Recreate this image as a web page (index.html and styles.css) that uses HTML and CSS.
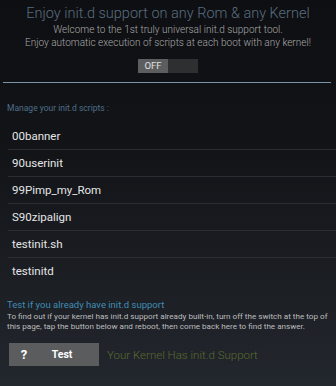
FILE: index.html
```html
<!DOCTYPE html>
<html lang="en">
<head>
  <meta charset="UTF-8" />
  <meta name="viewport" content="width=device-width, initial-scale=1.0" />
  <title>Universal Init.d</title>
  <link rel="stylesheet" href="styles.css">
</head>
<body>

  <!-- Header -->
  <div class="header">
    <h1 class="title">Enjoy init.d support on any Rom &amp; any Kernel</h1>
    <p class="intro">Welcome to the 1st truly universal init.d support tool.</p>
    <p class="intro">Enjoy automatic execution of scripts at each boot with any kernel!</p>
    <div class="switch" onclick="toggleSwitch(this)">
      <span class="switch-thumb">OFF</span>
      <span class="switch-track"></span>
    </div>
  </div>

  <div class="divider"></div>

  <!-- Scripts list -->
  <div class="section-label">Manage your init.d scripts :</div>
  <ul class="scripts">
    <li>00banner</li>
    <li>90userinit</li>
    <li>99Pimp_my_Rom</li>
    <li>S90zipalign</li>
    <li>testinit.sh</li>
    <li>testinitd</li>
  </ul>

  <!-- Test section -->
  <div class="test-section">
    <div class="test-title">Test if you already have init.d support</div>
    <p class="test-desc">To find out if your kernel has init.d support already built-in, turn off the switch at the top of this page, tap the button below and reboot, then come back here to find the answer.</p>
    <div class="test-row">
      <button class="test-btn"><span class="test-icon">?</span><span class="test-label">Test</span></button>
      <span class="test-result">Your Kernel Has init.d Support</span>
    </div>
  </div>

  <script>
    function toggleSwitch(el) {
      el.classList.toggle('on');
    }
  </script>

</body>
</html>
```

FILE: styles.css
```css
* {
  box-sizing: border-box;
  margin: 0;
  padding: 0;
}

body {
  font-family: Roboto, 'Noto Sans', sans-serif;
  background: linear-gradient(to bottom, #0e0f12 0%, #121418 40%, #1c1f24 75%, #23272e 100%);
  width: 336px;
  height: 386px;
  overflow: hidden;
}

.header {
  text-align: center;
  padding-top: 5px;
}

.title {
  font-size: 14.5px;
  font-weight: 300;
  color: #5a6d80;
  line-height: 18px;
}

.intro {
  font-size: 10px;
  font-weight: 300;
  color: #a9a9a9;
  line-height: 13px;
}

.switch {
  display: inline-flex;
  vertical-align: top;
  margin-top: 10px;
  height: 14px;
  width: 60px;
  background: #2e2f31;
  cursor: pointer;
}

.switch-thumb {
  width: 30px;
  background: #5c5d5f;
  color: #e0e0e0;
  font-size: 9.5px;
  line-height: 14px;
  text-align: center;
}

.divider {
  margin: 9px 5px 0 3px;
  height: 1px;
  background: #7a93a8;
}

.section-label {
  margin-top: 20px;
  padding-left: 7px;
  font-size: 8.5px;
  color: #4d6e87;
  line-height: 11px;
}

.scripts {
  list-style: none;
  margin-top: 9px;
  margin-left: 8px;
}

.scripts li {
  height: 27px;
  line-height: 27px;
  padding-left: 4px;
  font-size: 11.5px;
  color: #e6e6e6;
  border-bottom: 1px solid #2a2e34;
}

.scripts li:last-child {
  border-bottom: none;
}

.test-section {
  margin-top: 14px;
  padding: 0 7px;
}

.test-title {
  font-size: 9.5px;
  color: #3f8db5;
  line-height: 12px;
}

.test-desc {
  font-size: 8.1px;
  color: #bdbdbd;
  line-height: 10px;
}

.test-row {
  display: flex;
  align-items: center;
  margin-top: 12px;
  padding-left: 2px;
}

.test-btn {
  display: flex;
  align-items: center;
  width: 90px;
  height: 23px;
  border: none;
  background: #5b5c5e;
  color: #fff;
  font-family: inherit;
  font-weight: bold;
  cursor: pointer;
}

.test-icon {
  width: 30px;
  font-size: 13px;
  text-align: center;
}

.test-label {
  flex: 1;
  font-size: 10.5px;
  text-align: center;
  padding-right: 14px;
}

.test-result {
  margin-left: 8px;
  font-size: 11.5px;
  font-weight: 300;
  color: #5a6a2e;
}
```
